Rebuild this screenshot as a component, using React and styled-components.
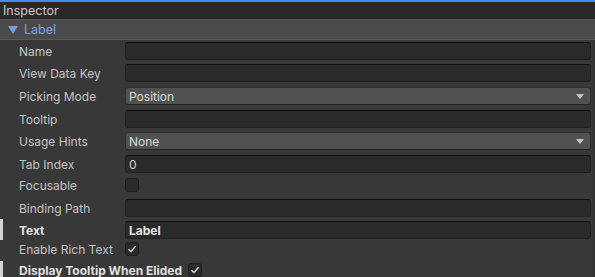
import React from "react";
import styled, { createGlobalStyle } from "styled-components";

const Global = createGlobalStyle`
  html, body { margin: 0; padding: 0; background: #383838; }
  body { font-family: Inter, "Noto Sans", sans-serif; font-size: 12px; overflow: hidden; }
  * { box-sizing: border-box; }
`;

const Window = styled.div`
  width: 595px;
  height: 277px;
  background: #383838;
  border-top: 2px solid #3a8ef0;
  display: flex;
  flex-direction: column;
  overflow: hidden;
`;

const TitleBar = styled.div`
  height: 18px;
  background: #282828;
  color: #c8c8c8;
  font-size: 12.5px;
  line-height: 18px;
  padding-left: 3px;
  border-bottom: 1px solid #5a5a5a;
  flex-shrink: 0;
`;

const Foldout = styled.div`
  height: 20px;
  background: #4a4a4a;
  border-bottom: 1px solid #5a5a5a;
  display: flex;
  align-items: center;
  gap: 6px;
  padding-left: 8px;
  color: #7aa6ea;
  font-size: 12.5px;
  flex-shrink: 0;
`;

const Triangle = styled.span`
  width: 0;
  height: 0;
  border-left: 5px solid transparent;
  border-right: 5px solid transparent;
  border-top: 8px solid #6f9ee6;
  margin-top: 1px;
`;

const Body = styled.div`
  display: flex;
  flex-direction: column;
  padding-right: 3px;
  border-right: 1px solid #2e2e2e;
  flex: 1;
`;

const Row = styled.div`
  display: flex;
  align-items: flex-start;
  flex-shrink: 0;
  height: ${(p) => p.$h}px;
  padding-top: 2px;
  padding-left: ${(p) => (p.$override ? "16px" : "19px")};
  border-left: ${(p) => (p.$override ? "3px solid #d4d4d4" : "none")};
`;

const Label = styled.div`
  min-width: 106px;
  flex-shrink: 0;
  padding-right: 6px;
  padding-top: 1px;
  line-height: ${(p) => (p.$check ? "14px" : "18px")};
  color: ${(p) => (p.$bold ? "#e0e0e0" : "#c4c4c4")};
  font-weight: ${(p) => (p.$bold ? 700 : 400)};
  white-space: nowrap;
`;

const TextField = styled.div`
  flex: 1;
  height: 18px;
  background: #2a2a2a;
  border: 1px solid #212121;
  border-top-color: #0f0f0f;
  border-radius: 3px;
  color: ${(p) => (p.$bold ? "#e6e6e6" : "#d2d2d2")};
  font-weight: ${(p) => (p.$bold ? 700 : 400)};
  padding-left: 3px;
  line-height: 17px;
`;

const Dropdown = styled.div`
  flex: 1;
  height: 18px;
  background: #515151;
  border: 1px solid #303030;
  border-bottom-color: #242424;
  border-radius: 3px;
  color: #dcdcdc;
  padding: 1px 6px 0 3px;
  display: flex;
  align-items: center;
  justify-content: space-between;
`;

const Arrow = styled.span`
  width: 0;
  height: 0;
  border-left: 4px solid transparent;
  border-right: 4px solid transparent;
  border-top: 5px solid #c4c4c4;
`;

const CheckBox = styled.div`
  width: 14px;
  height: 14px;
  background: #2a2a2a;
  border: 1px solid #1e1e1e;
  border-radius: 3px;
  display: flex;
  align-items: center;
  justify-content: center;
`;

const Check = () => (
  <svg width="10" height="10" viewBox="0 0 10 10">
    <path d="M1.5 5.2 L4 7.6 L8.6 2.2" fill="none" stroke="#e0e0e0" strokeWidth="1.4" />
  </svg>
);

const rows = [
  { label: "Name", type: "text", h: 22 },
  { label: "View Data Key", type: "text", h: 23 },
  { label: "Picking Mode", type: "drop", value: "Position", h: 23 },
  { label: "Tooltip", type: "text", h: 22 },
  { label: "Usage Hints", type: "drop", value: "None", h: 23 },
  { label: "Tab Index", type: "text", value: "0", h: 23 },
  { label: "Focusable", type: "check", checked: false, h: 21 },
  { label: "Binding Path", type: "text", h: 22 },
  { label: "Text", type: "text", value: "Label", override: true, h: 21 },
  { label: "Enable Rich Text", type: "check", checked: true, h: 21 },
  { label: "Display Tooltip When Elided", type: "check", checked: true, override: true, h: 21 },
];

export default function App() {
  return (
    <>
      <Global />
      <Window>
        <TitleBar>Inspector</TitleBar>
        <Foldout>
          <Triangle />
          Label
        </Foldout>
        <Body>
          {rows.map((r) => (
            <Row key={r.label} $h={r.h} $override={r.override}>
              <Label $bold={r.override} $check={r.type === "check"}>{r.label}</Label>
              {r.type === "text" && <TextField $bold={r.override}>{r.value || ""}</TextField>}
              {r.type === "drop" && (
                <Dropdown>
                  {r.value}
                  <Arrow />
                </Dropdown>
              )}
              {r.type === "check" && <CheckBox>{r.checked && <Check />}</CheckBox>}
            </Row>
          ))}
        </Body>
      </Window>
    </>
  );
}
